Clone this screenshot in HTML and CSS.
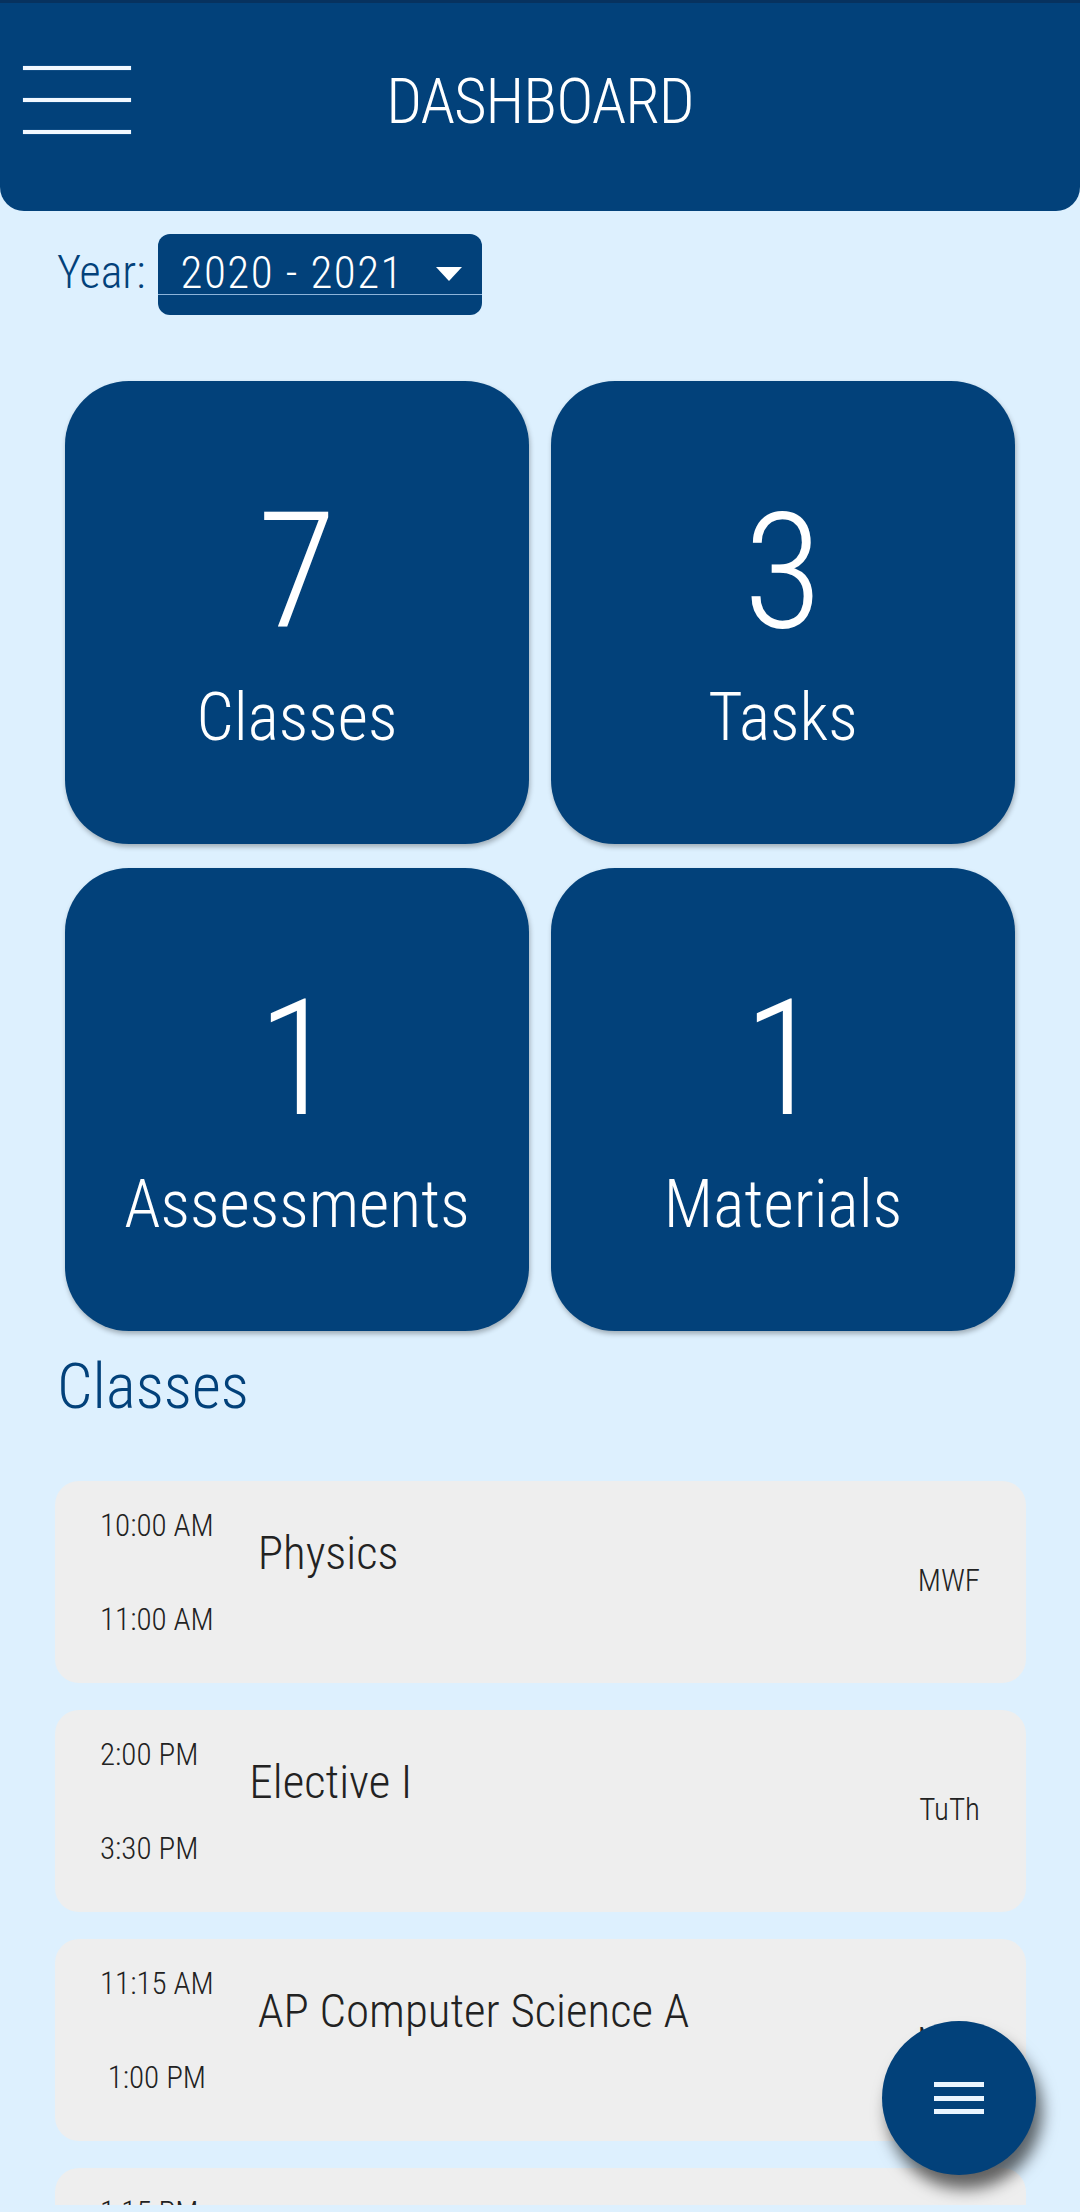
FILE: index.html
```html
<!DOCTYPE html>
<html lang="en">
<head>
<meta charset="utf-8">
<title>Dashboard</title>
<link rel="stylesheet" href="styles.css">
</head>
<body>
<div class="screen">
  <header class="topbar">
    <button class="menu-btn" aria-label="Menu">
      <span class="bar"></span><span class="bar"></span><span class="bar"></span>
    </button>
    <h1 class="title">DASHBOARD</h1>
    <div class="spacer"></div>
  </header>

  <div class="year-row">
    <span class="year-label">Year:</span>
    <div class="select">
      <div class="select-inner">
        <span class="select-value">2020 - 2021</span>
        <span class="caret"></span>
      </div>
    </div>
  </div>

  <section class="stats">
    <div class="stat"><div class="stat-num">7</div><div class="stat-label">Classes</div></div>
    <div class="stat"><div class="stat-num">3</div><div class="stat-label">Tasks</div></div>
    <div class="stat"><div class="stat-num">1</div><div class="stat-label">Assessments</div></div>
    <div class="stat"><div class="stat-num">1</div><div class="stat-label">Materials</div></div>
  </section>

  <h2 class="section-title">Classes</h2>

  <section class="class-list">
    <div class="class-card">
      <div class="times"><span>10:00 AM</span><span>11:00 AM</span></div>
      <div class="class-name">Physics</div>
      <div class="days">MWF</div>
    </div>
    <div class="class-card">
      <div class="times"><span>2:00 PM</span><span>3:30 PM</span></div>
      <div class="class-name narrow">Elective I</div>
      <div class="days">TuTh</div>
    </div>
    <div class="class-card">
      <div class="times"><span>11:15 AM</span><span>1:00 PM</span></div>
      <div class="class-name">AP Computer Science A</div>
      <div class="days">MWF</div>
    </div>
    <div class="class-card">
      <div class="times"><span>1:15 PM</span><span>2:45 PM</span></div>
      <div class="class-name">English</div>
      <div class="days">TuTh</div>
    </div>
  </section>

  <button class="fab" aria-label="Open menu">
    <span class="fab-bar"></span><span class="fab-bar"></span><span class="fab-bar"></span>
  </button>
</div>
</body>
</html>
```

FILE: styles.css
```css
html, body {
  margin: 0;
  padding: 0;
  background: #ddf0fe;
}

body {
  font-family: "Roboto Condensed", "Liberation Sans Narrow", "DejaVu Sans Condensed", sans-serif;
  font-weight: 300;
  color: #222;
}

.screen {
  position: relative;
  height: 2205px;
  overflow: hidden;
  background: #ddf0fe;
}

/* Header */
.topbar {
  box-sizing: border-box;
  height: 211px;
  border-top: 3px solid #07325f;
  background: #02417a;
  border-radius: 0 0 24px 24px;
  display: grid;
  grid-template-columns: 1fr auto 1fr;
  align-items: start;
  padding: 0 23px;
}

.menu-btn {
  margin: 63px 0 0 0;
  padding: 0;
  border: 0;
  background: none;
  width: 108px;
  display: flex;
  flex-direction: column;
  gap: 28px;
  justify-self: start;
}

.bar {
  display: block;
  height: 4px;
  width: 108px;
  background: #f2f8ff;
  box-shadow: 0 0 1px #9cc4ea;
}

.title {
  margin: 64px 0 0 0;
  font-weight: 300;
  font-size: 63px;
  line-height: 70px;
  letter-spacing: -1px;
  color: #ffffff;
}

/* Year selector */
.year-row {
  display: flex;
  align-items: baseline;
  gap: 12px;
  margin: 23px 0 0 57px;
}

.year-label {
  font-size: 46px;
  color: #02417a;
}

.select {
  box-sizing: border-box;
  width: 324px;
  height: 81px;
  padding: 18px 0 20px 0;
  background: #02417a;
  border-radius: 12px;
}

.select-inner {
  height: 42px;
  display: flex;
  align-items: center;
  justify-content: space-between;
  padding: 0 20px 0 23px;
  border-bottom: 1px solid #8db4da;
}

.select-value {
  font-size: 45px;
  line-height: 42px;
  letter-spacing: 1.5px;
  color: #ffffff;
  align-self: flex-start;
}

.caret {
  width: 0;
  height: 0;
  border-left: 13.5px solid transparent;
  border-right: 13.5px solid transparent;
  border-top: 14px solid #ffffff;
  margin-top: 2px;
}

/* Stats grid */
.stats {
  display: grid;
  grid-template-columns: 1fr 1fr;
  grid-auto-rows: 463px;
  column-gap: 22px;
  row-gap: 24px;
  margin: 66px 65px 0 65px;
}

.stat {
  background: #02417a;
  border-radius: 64px;
  box-shadow: 1px 3px 5px rgba(0, 0, 0, 0.28);
  display: flex;
  flex-direction: column;
  align-items: center;
  padding-top: 110px;
  box-sizing: border-box;
  color: #ffffff;
}

.stat-num {
  font-size: 162px;
  line-height: 162px;
}

.stat-label {
  margin-top: 32px;
  font-size: 66px;
  line-height: 66px;
}

/* Classes */
.section-title {
  margin: 24px 0 0 57px;
  font-weight: 300;
  font-size: 63px;
  line-height: 63px;
  color: #02417a;
}

.class-list {
  display: flex;
  flex-direction: column;
  gap: 27px;
  margin: 63px 54px 0 55px;
}

.class-card {
  box-sizing: border-box;
  height: 202px;
  background: #eeeeee;
  border-radius: 24px;
  padding: 29px 46px 0 45px;
  display: grid;
  grid-template-columns: auto 1fr auto;
  align-items: start;
}

.times {
  display: flex;
  flex-direction: column;
  align-items: center;
  gap: 63px;
  font-size: 31px;
  line-height: 31px;
  color: #222;
}

.class-name {
  margin: 19px 0 0 44px;
  font-size: 47px;
  line-height: 47px;
  color: #222;
}

.class-name.narrow {
  margin-left: 51px;
}

.days {
  margin-top: 55px;
  font-size: 31px;
  line-height: 31px;
  color: #222;
}

/* Floating action button */
.fab {
  position: absolute;
  right: 44px;
  bottom: 30px;
  width: 154px;
  height: 154px;
  border: 0;
  padding: 0;
  border-radius: 50%;
  background: #02417a;
  box-shadow: 6px 14px 16px rgba(0, 0, 0, 0.6);
  display: flex;
  flex-direction: column;
  align-items: center;
  justify-content: center;
  gap: 8.5px;
}

.fab-bar {
  display: block;
  width: 50px;
  height: 5px;
  background: #eaf5ff;
}
```
